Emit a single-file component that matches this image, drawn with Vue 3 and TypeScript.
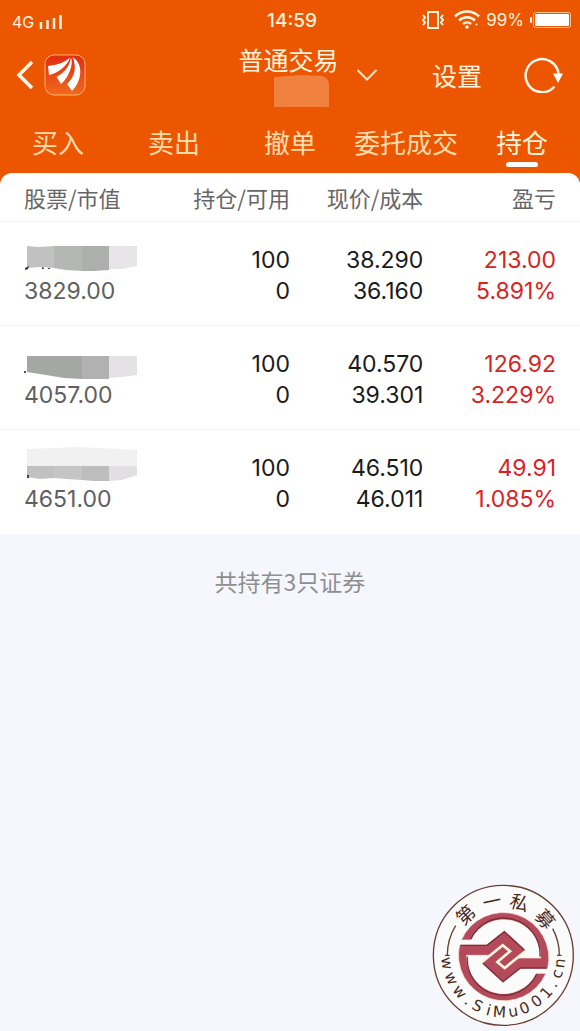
<script setup lang="ts">
import { ref } from 'vue'

interface Patch {
  points: string
  fill: string
}

interface Holding {
  value: string
  amount: string
  available: string
  price: string
  cost: string
  profit: string
  rate: string
  mask: Patch[]
}

const tabs = ['买入', '卖出', '撤单', '委托成交', '持仓']
const active = ref('持仓')

const holdings: Holding[] = [
  {
    value: '3829.00', amount: '100', available: '0', price: '38.290', cost: '36.160', profit: '213.00', rate: '5.891%',
    mask: [
      { points: '3,1 15,2 30,1 30,23 16,22 3,23', fill: '#c2c1c1' },
      { points: '30,1 58,1 58,26 42,25 30,23', fill: '#b4b7b4' },
      { points: '58,1 85,1 85,25 70,26 58,26', fill: '#acafac' },
      { points: '85,1 113,1 113,21 98,24 85,24', fill: '#e7e5e7' },
      { points: '1,23 5,21 4,24 1,25', fill: '#333' },
      { points: '18,22 20,23 20,24 18,24', fill: '#444' },
      { points: '24,23 26,23 26,24 24,24', fill: '#444' },
    ],
  },
  {
    value: '4057.00', amount: '100', available: '0', price: '40.570', cost: '39.301', profit: '126.92', rate: '3.229%',
    mask: [
      { points: '3,7 58,7 58,30 40,29 22,26 3,23', fill: '#a5a7a5' },
      { points: '58,7 85,7 85,30 58,30', fill: '#b2b1b2' },
      { points: '85,7 113,7 113,26 98,28 85,29', fill: '#e4e2e4' },
      { points: '0,22 2,22 2,24 0,24', fill: '#555' },
    ],
  },
  {
    value: '4651.00', amount: '100', available: '0', price: '46.510', cost: '46.011', profit: '49.91', rate: '1.085%',
    mask: [
      { points: '3,-4 55,-6 113,-3 113,13 3,13', fill: '#f1f1f2' },
      { points: '3,13 30,13 30,25 16,26 3,24', fill: '#c1c1c1' },
      { points: '30,13 58,13 58,27 42,26 30,25', fill: '#c5c5c5' },
      { points: '58,13 85,13 85,28 70,28 58,27', fill: '#bdbdbd' },
      { points: '85,13 113,13 113,22 98,27 85,28', fill: '#e1dfe1' },
      { points: '3,22 5,22 5,25 3,25', fill: '#444' },
    ],
  },
]

interface SealGlyph {
  char: string
  angle: number
}

const sealTop: SealGlyph[] = [
  { char: '第', angle: -43 },
  { char: '一', angle: -12 },
  { char: '私', angle: 17 },
  { char: '募', angle: 49 },
]

const sealBottom: SealGlyph[] = [
  { char: 'w', angle: 82 },
  { char: 'w', angle: 66 },
  { char: 'w', angle: 50 },
  { char: '.', angle: 38 },
  { char: 'S', angle: 27 },
  { char: 'i', angle: 15 },
  { char: 'M', angle: 4 },
  { char: 'u', angle: -10 },
  { char: '0', angle: -22 },
  { char: '0', angle: -36 },
  { char: '1', angle: -49 },
  { char: '.', angle: -60 },
  { char: 'c', angle: -71 },
  { char: 'n', angle: -82 },
]
</script>

<template>
  <div class="screen">
    <header class="top">
      <div class="status">
        <div class="carrier">
          <span>4G</span>
          <svg class="signal" viewBox="0 0 24 16" aria-hidden="true">
            <path d="M2 8v7M8.500 6v9M15 4v11M21.500 1v14" />
          </svg>
        </div>
        <span class="clock">14:59</span>
        <div class="indicators">
          <svg class="vibrate" viewBox="0 0 24 20" aria-hidden="true">
            <rect x="7" y="2" width="10" height="16" />
            <path d="M2 5l2 2.500-2 2.500 2 2.500-2 2.500M22 5l-2 2.500 2 2.500-2 2.500 2 2.500" />
          </svg>
          <svg class="wifi" viewBox="0 0 26 20" aria-hidden="true">
            <path d="M1 6.500a17 17 0 0 1 24 0M5 10.500a11.500 11.500 0 0 1 16 0M9 14a6 6 0 0 1 8 0" />
            <circle cx="13" cy="17" r="1.800" />
            <circle cx="22.500" cy="14.500" r="1" />
          </svg>
          <span>99%</span>
          <svg class="battery" viewBox="0 0 42 18" aria-hidden="true">
            <rect class="tip" x="0" y="6" width="2" height="6" rx="1" />
            <rect class="case" x="3.500" y="1.500" width="37" height="15" rx="2" />
            <rect class="charge" x="5" y="3" width="34" height="12" rx="1" />
          </svg>
        </div>
      </div>

      <div class="bar">
        <div class="side">
          <button class="plain" type="button" aria-label="返回">
            <svg class="back" viewBox="0 0 18 32" aria-hidden="true"><path d="M16 3L3 16l13 13" /></svg>
          </button>
          <svg class="logo" viewBox="0 0 42 42" aria-hidden="true">
            <defs>
              <linearGradient id="logo-fill" x1="0" y1="0" x2="0" y2="1">
                <stop offset="0" stop-color="#e02c12" />
                <stop offset="1" stop-color="#f06a1c" />
              </linearGradient>
            </defs>
            <rect x="1" y="1" width="40" height="40" rx="9" />
            <path d="M4 12C13 11 20 9 26 3.500C24 11 15 19 5 21Z" />
            <path d="M27 3.500C30 11 24 24 17 30L12.500 23C20 19 26 12 27 3.500Z" />
            <path d="M28.500 3C40 10 38 27 28 37L23 30C31 23 33 13 28.500 3Z" />
          </svg>
        </div>
        <button class="account plain" type="button">
          <span class="account-text">
            <span>普通交易</span>
            <svg class="account-mask" viewBox="0 0 56 32" aria-hidden="true">
              <path d="M0 2L28 0L48 1Q55 3 55 10V32H0Z" />
            </svg>
          </span>
          <svg class="chevron" viewBox="0 0 22 14" aria-hidden="true"><path d="M1.500 2L11 11.500L20.500 2" /></svg>
        </button>
        <div class="side end">
          <button class="plain settings" type="button">设置</button>
          <button class="plain" type="button" aria-label="刷新">
            <svg class="refresh" viewBox="0 0 40 36" aria-hidden="true">
              <path class="ring" d="M30.500 29.500A16.500 16.500 0 1 1 34.500 17" />
              <path class="arrow" d="M29 16.500h10l-5 9.500z" />
            </svg>
          </button>
        </div>
      </div>

      <nav class="tabs">
        <button
          v-for="tab in tabs"
          :key="tab"
          class="tab plain"
          :class="{ active: tab === active }"
          type="button"
          @click="active = tab"
        >{{ tab }}</button>
      </nav>
    </header>

    <main>
      <table class="holdings">
        <thead>
          <tr><th>股票/市值</th><th>持仓/可用</th><th>现价/成本</th><th>盈亏</th></tr>
        </thead>
        <tbody>
          <tr v-for="item in holdings" :key="item.value">
            <td class="market">
              <svg class="mask" viewBox="0 0 114 31" aria-hidden="true">
                <polygon v-for="(patch, i) in item.mask" :key="i" :points="patch.points" :fill="patch.fill" />
              </svg>
              <div>{{ item.value }}</div>
            </td>
            <td><div>{{ item.amount }}</div><div>{{ item.available }}</div></td>
            <td><div>{{ item.price }}</div><div>{{ item.cost }}</div></td>
            <td class="gain"><div>{{ item.profit }}</div><div>{{ item.rate }}</div></td>
          </tr>
        </tbody>
      </table>
      <p class="summary">共持有3只证券</p>
    </main>

    <svg class="seal" viewBox="0 0 465 465" role="img" aria-label="第一私募 www.SiMu001.cn">
      <circle class="disc" cx="235" cy="238" r="210" />
      <path class="thin" d="M60 238H74M67 238A168 168 0 0 1 92 149M410 238H396M403 238A168 168 0 0 0 383 158" />
      <g transform="translate(236 242)">
        <g v-for="turn in [0, 180]" :key="turn" :transform="`rotate(${turn})`">
          <path class="band" d="M-132 -36H-51L2 -78L66 -19L3 34L-20 16L19 -16L-3 -34L-43 -4H-111A111 111 0 0 0 99 50H127A137 137 0 0 1 -132 -36Z" />
          <path class="shade" d="M-129 -34H-50L2 -75L62 -20M-109 0A109 109 0 0 0 99 52" />
        </g>
        <path class="groove" d="M-66 17L-3 -34L19 -16L-19 16L3 34L66 -17" />
      </g>
      <g class="hanzi">
        <text v-for="g in sealTop" :key="g.char" :transform="`rotate(${g.angle} 235 238)`" x="235" y="93">{{ g.char }}</text>
      </g>
      <g class="latin">
        <text v-for="(g, i) in sealBottom" :key="i" :transform="`rotate(${g.angle} 235 238)`" x="235" y="424">{{ g.char }}</text>
      </g>
    </svg>
  </div>
</template>

<style>
body {
  margin: 0;
  background: #f6f7fe;
}
</style>

<style scoped>
.screen {
  position: relative;
  min-height: 100vh;
  background: #f6f7fe;
  font-family: "Inter", "Noto Sans CJK SC", sans-serif;
}

.plain {
  padding: 0;
  border: 0;
  background: none;
  color: inherit;
  font: inherit;
}

svg {
  display: block;
}

.top {
  padding-bottom: 16px;
  background: #ed5600;
  color: #fff3dc;
  font-family: "Noto Sans CJK SC", sans-serif;
}

.status {
  display: grid;
  grid-template-columns: 1fr auto 1fr;
  align-items: center;
  height: 40px;
  padding: 0 8px 0 12px;
  font-family: "Inter", sans-serif;
  font-size: 17px;
}

.carrier,
.indicators {
  display: flex;
  align-items: center;
}

.carrier {
  gap: 5px;
  padding-top: 3px;
  font-size: 16px;
}

.clock {
  font-size: 19px;
  font-weight: 500;
}

.indicators {
  justify-content: flex-end;
  gap: 6px;
}

.signal {
  width: 24px;
  height: 16px;
  fill: none;
  stroke: #fff3dc;
  stroke-width: 2.5;
}

.vibrate {
  width: 24px;
  height: 20px;
  margin-right: 3px;
  fill: none;
  stroke: #fff3dc;
  stroke-width: 2;
}

.wifi {
  width: 26px;
  height: 20px;
  fill: none;
  stroke: #fff3dc;
  stroke-width: 2.5;
}

.wifi circle {
  fill: #fff3dc;
  stroke: none;
}

.battery {
  width: 42px;
  height: 18px;
  fill: #fff;
}

.battery .case {
  fill: none;
  stroke: #ffc488;
  stroke-width: 1;
}

.bar {
  display: grid;
  grid-template-columns: 1fr auto 1fr;
  align-items: center;
  height: 70px;
  padding: 0 16px;
  font-size: 25px;
}

.side {
  display: flex;
  align-items: center;
  gap: 10px;
}

.end {
  justify-content: flex-end;
  gap: 42px;
}

.back {
  width: 18px;
  height: 32px;
  fill: none;
  stroke: #fff8ea;
  stroke-width: 3.5;
}

.logo {
  width: 42px;
  height: 42px;
  fill: #fff;
}

.logo rect {
  fill: url(#logo-fill);
  stroke: #ffb070;
  stroke-width: 1;
}

.account {
  display: flex;
  align-items: center;
  gap: 17px;
  margin-left: 36px;
}

.account-text {
  display: flex;
  flex-direction: column;
  align-items: center;
  line-height: 32px;
}

.account-mask {
  width: 56px;
  height: 32px;
  margin-left: 28px;
  fill: #f1813e;
}

.chevron {
  width: 22px;
  height: 14px;
  fill: none;
  stroke: #ffe8c8;
  stroke-width: 2;
}

.refresh {
  width: 40px;
  height: 36px;
}

.refresh .ring {
  fill: none;
  stroke: #fff8ea;
  stroke-width: 2.5;
}

.refresh .arrow {
  fill: #fff;
}

.tabs {
  display: grid;
  grid-template-columns: repeat(5, 1fr);
  height: 63px;
}

.tab {
  display: flex;
  flex-direction: column;
  align-items: center;
  padding-top: 12px;
  color: #ffdcae;
  font-size: 26px;
  line-height: 40px;
}

.tab.active {
  color: #fff3dc;
}

.tab.active::after {
  width: 32px;
  height: 5px;
  border-radius: 3px;
  background: #fff;
  content: "";
}

main {
  margin-top: -16px;
}

.holdings {
  width: 100%;
  border-radius: 12px 12px 0 0;
  border-spacing: 0;
  table-layout: fixed;
  background: #fff;
}

th,
td {
  box-sizing: border-box;
  width: 27%;
  padding: 0;
  text-align: right;
}

th:nth-child(odd) {
  width: 23%;
}

th {
  height: 49px;
  border-bottom: 1px solid #f3f3f3;
  color: #666;
  font-family: "Noto Sans CJK SC", sans-serif;
  font-size: 22px;
  font-weight: 400;
}

th:first-child,
td:first-child {
  padding-left: 24px;
  text-align: left;
  white-space: nowrap;
}

th:last-child,
td:last-child {
  padding-right: 24px;
}

td {
  height: 104px;
  padding-top: 4px;
  border-bottom: 1px solid #f3f3f3;
  color: #1a1a1a;
  font-size: 23px;
  line-height: 31px;
}

tbody tr:last-child td {
  border-bottom: 0;
}

.market {
  color: #606060;
}

.mask {
  width: 114px;
  height: 31px;
  overflow: visible;
}

.gain {
  color: #d8231f;
}

.summary {
  margin: 30px 0 0;
  color: #8e908e;
  font-family: "Noto Sans CJK SC", sans-serif;
  font-size: 23px;
  line-height: 34px;
  text-align: center;
}

.seal {
  position: absolute;
  right: 0;
  bottom: 0;
  width: 155px;
  height: 155px;
}

.disc {
  fill: #fbfbfc;
  stroke: #67402f;
  stroke-width: 4;
}

.thin {
  fill: none;
  stroke: #67402f;
  stroke-width: 4;
}

.band {
  fill: #b54a5c;
  stroke: #fff6e0;
  stroke-width: 2;
}

.shade {
  fill: none;
  stroke: #7a3038;
  stroke-width: 4;
}

.groove {
  fill: none;
  stroke: #fff6e0;
  stroke-width: 8;
}

.hanzi,
.latin {
  fill: #4a2a1a;
  text-anchor: middle;
}

.hanzi {
  font-family: "Noto Sans CJK SC", sans-serif;
  font-size: 56px;
}

.latin {
  font-family: "DejaVu Sans", sans-serif;
  font-size: 46px;
}
</style>
